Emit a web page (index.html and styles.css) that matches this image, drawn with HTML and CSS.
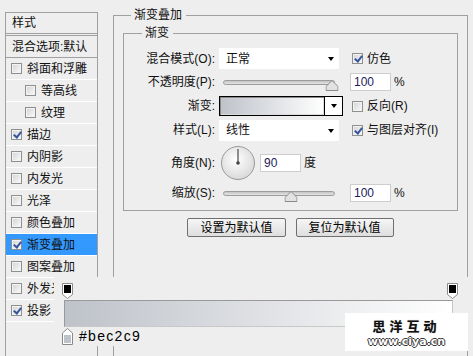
FILE: index.html
```html
<!DOCTYPE html>
<html lang="zh-CN">

<head>
  <meta charset="UTF-8" />
  <meta name="viewport" content="width=device-width, initial-scale=1.0" />
  <title>图层样式 - 渐变叠加</title>
  <link rel="stylesheet" href="styles.css">
</head>

<body>
  <div class="dialog">
    <div class="style-list">
      <div class="list-head">样式</div>
      <div class="list-blend">混合选项:默认</div>
      <div class="list-item"><span class="cb"></span>斜面和浮雕</div>
      <div class="list-item sub"><span class="cb"></span>等高线</div>
      <div class="list-item sub"><span class="cb"></span>纹理</div>
      <div class="list-item"><span class="cb on"></span>描边</div>
      <div class="list-item"><span class="cb"></span>内阴影</div>
      <div class="list-item"><span class="cb"></span>内发光</div>
      <div class="list-item"><span class="cb"></span>光泽</div>
      <div class="list-item"><span class="cb"></span>颜色叠加</div>
      <div class="list-item active"><span class="cb on"></span>渐变叠加</div>
      <div class="list-item"><span class="cb"></span>图案叠加</div>
      <div class="list-item"><span class="cb"></span>外发光</div>
      <div class="list-item"><span class="cb on"></span>投影</div>
    </div>

    <div class="main">
      <fieldset class="group outer">
        <legend>渐变叠加</legend>
        <fieldset class="group inner">
          <legend>渐变</legend>
          <div class="form-grid">
            <!-- 混合模式 -->
            <label class="lbl">混合模式(O):</label>
            <div class="select">正常<span class="arrow"></span></div>
            <div class="opt"><span class="cb on"></span>仿色</div>

            <!-- 不透明度 -->
            <label class="lbl">不透明度(P):</label>
            <div class="slider">
              <svg class="handle" style="left: 98%" width="13" height="11" viewBox="0 0 13 11">
                <path d="M6.5 0.5 L12.5 6.5 V10.5 H0.5 V6.5 Z" fill="#e2e2e2" stroke="#8a8a8a" />
              </svg>
            </div>
            <div class="num-wrap"><span class="num">100</span>%</div>

            <!-- 渐变 -->
            <label class="lbl">渐变:</label>
            <div class="grad-pick">
              <div class="grad-fill"></div>
              <div class="grad-btn"><span class="arrow"></span></div>
            </div>
            <div class="opt"><span class="cb"></span>反向(R)</div>

            <!-- 样式 -->
            <label class="lbl">样式(L):</label>
            <div class="select">线性<span class="arrow"></span></div>
            <div class="opt"><span class="cb on"></span>与图层对齐(I)</div>

            <!-- 角度 -->
            <label class="lbl">角度(N):</label>
            <div class="angle">
              <svg width="36" height="36" viewBox="0 0 36 36">
                <defs>
                  <radialGradient id="dialFill" cx="45%" cy="40%" r="65%">
                    <stop offset="0" stop-color="#ffffff" />
                    <stop offset="1" stop-color="#d6d6d6" />
                  </radialGradient>
                </defs>
                <circle cx="18" cy="18" r="16.5" fill="url(#dialFill)" stroke="#9a9a9a" />
                <line x1="18" y1="18" x2="18" y2="4" stroke="#555" stroke-width="1.3" />
                <circle cx="18" cy="18" r="1.8" fill="#444" />
              </svg>
              <span class="num">90</span>
              <span>度</span>
            </div>
            <div></div>

            <!-- 缩放 -->
            <label class="lbl">缩放(S):</label>
            <div class="slider">
              <svg class="handle" style="left: 61%" width="13" height="11" viewBox="0 0 13 11">
                <path d="M6.5 0.5 L12.5 6.5 V10.5 H0.5 V6.5 Z" fill="#e2e2e2" stroke="#8a8a8a" />
              </svg>
            </div>
            <div class="num-wrap"><span class="num">100</span>%</div>
          </div>
        </fieldset>

        <div class="btn-row">
          <button class="btn">设置为默认值</button>
          <button class="btn">复位为默认值</button>
        </div>
      </fieldset>
    </div>

    <!-- gradient editor strip pasted over the dialog -->
    <div class="grad-editor">
      <div class="stops-top">
        <svg width="11" height="16" viewBox="0 0 11 16">
          <path d="M0.5 0.5 H10.5 V11.5 L5.5 15.5 L0.5 11.5 Z" fill="#fff" stroke="#8a8a8a" />
          <rect x="2" y="2" width="7" height="8" fill="#000" />
        </svg>
        <svg width="11" height="16" viewBox="0 0 11 16">
          <path d="M0.5 0.5 H10.5 V11.5 L5.5 15.5 L0.5 11.5 Z" fill="#fff" stroke="#8a8a8a" />
          <rect x="2" y="2" width="7" height="8" fill="#000" />
        </svg>
      </div>
      <div class="grad-bar"></div>
      <div class="stop-bottom">
        <svg width="11" height="17" viewBox="0 0 11 17">
          <path d="M5.5 0.5 L10.5 5 V16.5 H0.5 V5 Z" fill="#fff" stroke="#8a8a8a" />
          <rect x="2" y="7" width="7" height="8" fill="#bec2c9" />
        </svg>
        <span class="hex">#bec2c9</span>
      </div>
    </div>

    <div class="watermark">
      <div class="wm-cn">思洋互动</div>
      <div class="wm-url">www.ciya.cn</div>
    </div>
  </div>
</body>

</html>
```

FILE: styles.css
```css
:root {
  --color-bg: #eeeeee;
  --color-line: #a0a0a0;
  --color-select: #3399ff;
  --color-text: #111;
  --font-base: "Liberation Sans", "Noto Sans CJK SC", sans-serif;
}

* {
  box-sizing: border-box;
  margin: 0;
  padding: 0;
}

body {
  width: 473px;
  height: 356px;
  overflow: hidden;
  background-color: var(--color-bg);
  color: var(--color-text);
  font-family: var(--font-base);
  font-size: 12px;
  line-height: 16px;
}

.dialog {
  position: relative;
  display: flex;
  width: 473px;
  height: 356px;
  overflow: hidden;
}

/* left style list */
.style-list {
  width: 93px;
  height: 360px;
  margin: 12px 0 0 5px;
  border: 1px solid var(--color-line);
}

.list-head {
  height: 23px;
  padding: 2px 0 0 6px;
  border-bottom: 3px double var(--color-line);
}

.list-blend {
  height: 22px;
  padding: 3px 0 0 6px;
  border-bottom: 1px solid var(--color-line);
}

.list-item {
  display: flex;
  align-items: center;
  gap: 5px;
  height: 22px;
  padding-left: 5px;
  border-bottom: 1px solid #fff;
  white-space: nowrap;
}

.list-item.sub {
  padding-left: 19px;
}

.list-item.active {
  background-color: var(--color-select);
}

/* checkbox */
.cb {
  position: relative;
  flex: none;
  display: inline-block;
  width: 11px;
  height: 11px;
  border: 1px solid #8e8f8f;
  background: linear-gradient(135deg, #d2d2d2, #fbfbfb);
  box-shadow: inset 0 0 0 1px #f3f3f3;
}

.cb.on::after {
  content: "";
  position: absolute;
  left: 3px;
  top: 0;
  width: 3px;
  height: 6px;
  border: solid #3556a0;
  border-width: 0 2px 2px 0;
  transform: rotate(38deg);
}

/* main panel */
.main {
  margin-left: 15px;
}

.group {
  border: 1px solid var(--color-line);
  min-width: 0;
}

.group legend {
  line-height: 16px;
  padding: 0 4px 0 3px;
}

.outer {
  width: 355px;
  height: 360px;
  margin-top: 7px;
  padding: 0 9px;
}

.outer > legend {
  margin-left: 8px;
}

.inner {
  width: 335px;
  margin-top: 2px;
  padding: 0;
}

.inner > legend {
  margin-left: 18px;
}

.form-grid {
  display: grid;
  grid-template-columns: 91px 124px 1fr;
  grid-template-rows: 23px 24px 24px 24px 42px 18px;
  column-gap: 4px;
  align-items: center;
  padding: 6px 0 8px;
}

.lbl {
  text-align: right;
  white-space: nowrap;
}

.select {
  position: relative;
  display: flex;
  align-items: center;
  width: 120px;
  height: 21px;
  padding-left: 7px;
  background-color: #fff;
}

.arrow {
  display: inline-block;
  width: 0;
  height: 0;
  border-left: 3.5px solid transparent;
  border-right: 3.5px solid transparent;
  border-top: 4px solid #000;
}

.select .arrow {
  position: absolute;
  right: 5px;
  top: 9px;
}

.opt {
  display: flex;
  align-items: center;
  gap: 4px;
  margin-left: 5px;
  white-space: nowrap;
}

.num-wrap {
  display: flex;
  align-items: center;
  gap: 3px;
  margin-left: 3px;
}

.num {
  display: inline-block;
  width: 41px;
  height: 18px;
  padding-left: 3px;
  border: 1px solid #cdcdcd;
  background-color: #fff;
  color: #1c1c5c;
  line-height: 16px;
}

.slider {
  position: relative;
  width: 112px;
  height: 5px;
  margin-left: 4px;
  border: 1px solid #9c9c9c;
  border-radius: 3px;
  background: linear-gradient(#c4c4c4, #e4e4e4);
}

.handle {
  position: absolute;
  top: -1px;
  transform: translateX(-50%);
}

.grad-pick {
  display: flex;
  width: 124px;
  height: 20px;
  border: 1px solid #000;
  background-color: #fff;
}

.grad-fill {
  flex: 1;
  background: linear-gradient(to right, #bec2c9, #ffffff);
  box-shadow: inset 1px 1px 0 #8a8a8a, inset -1px -1px 0 #dcdcdc;
}

.grad-btn {
  display: flex;
  align-items: center;
  justify-content: center;
  width: 18px;
  border-left: 1px solid #000;
}

.angle {
  display: flex;
  align-items: center;
  gap: 3px;
  margin-left: 1px;
  white-space: nowrap;
}

.angle .num {
  margin-left: 1px;
}

.btn-row {
  display: flex;
  justify-content: center;
  gap: 10px;
  margin-top: 7px;
}

.btn {
  height: 19px;
  padding: 0 12px;
  border: 1px solid #707070;
  border-radius: 2px;
  background: linear-gradient(#f6f6f6, #dedede);
  font-family: inherit;
  font-size: 12px;
  color: #000;
  line-height: 16px;
}

/* gradient editor strip */
.grad-editor {
  position: absolute;
  left: 54px;
  top: 277px;
  width: 419px;
  height: 69px;
  padding: 6px 0 0 8px;
  background-color: var(--color-bg);
}

.stops-top {
  display: flex;
  justify-content: space-between;
  width: 396px;
  height: 16px;
}

.stops-top svg,
.stop-bottom svg {
  display: block;
}

.grad-bar {
  width: 389px;
  height: 27px;
  margin: 1px 0 0 2px;
  border: 1px solid #999;
  border-right-color: #c8c8c8;
  border-bottom-color: #c8c8c8;
  background: linear-gradient(to right, #bec2c9, #ffffff);
}

.stop-bottom {
  display: flex;
  align-items: center;
  gap: 6px;
  margin-top: 1px;
}

.hex {
  font-family: "Liberation Sans", sans-serif;
  font-size: 14px;
  letter-spacing: 1.3px;
  color: #000;
  line-height: 17px;
}

.watermark {
  position: absolute;
  left: 345px;
  top: 313px;
  width: 123px;
  height: 38px;
  display: flex;
  flex-direction: column;
  align-items: center;
  padding-top: 3px;
  background-color: #fff;
}

.wm-cn {
  font-family: "Noto Sans CJK SC", sans-serif;
  font-size: 13px;
  font-weight: 700;
  letter-spacing: 4px;
  line-height: 19px;
  color: #111;
  text-shadow: 0 0 1px #888;
}

.wm-url {
  font-family: "DejaVu Sans", sans-serif;
  font-size: 11px;
  font-weight: 700;
  line-height: 13px;
  color: #fff;
  text-shadow: 1px 0 0 #333, -1px 0 0 #333, 0 1px 0 #333, 0 -1px 0 #333;
}
```
